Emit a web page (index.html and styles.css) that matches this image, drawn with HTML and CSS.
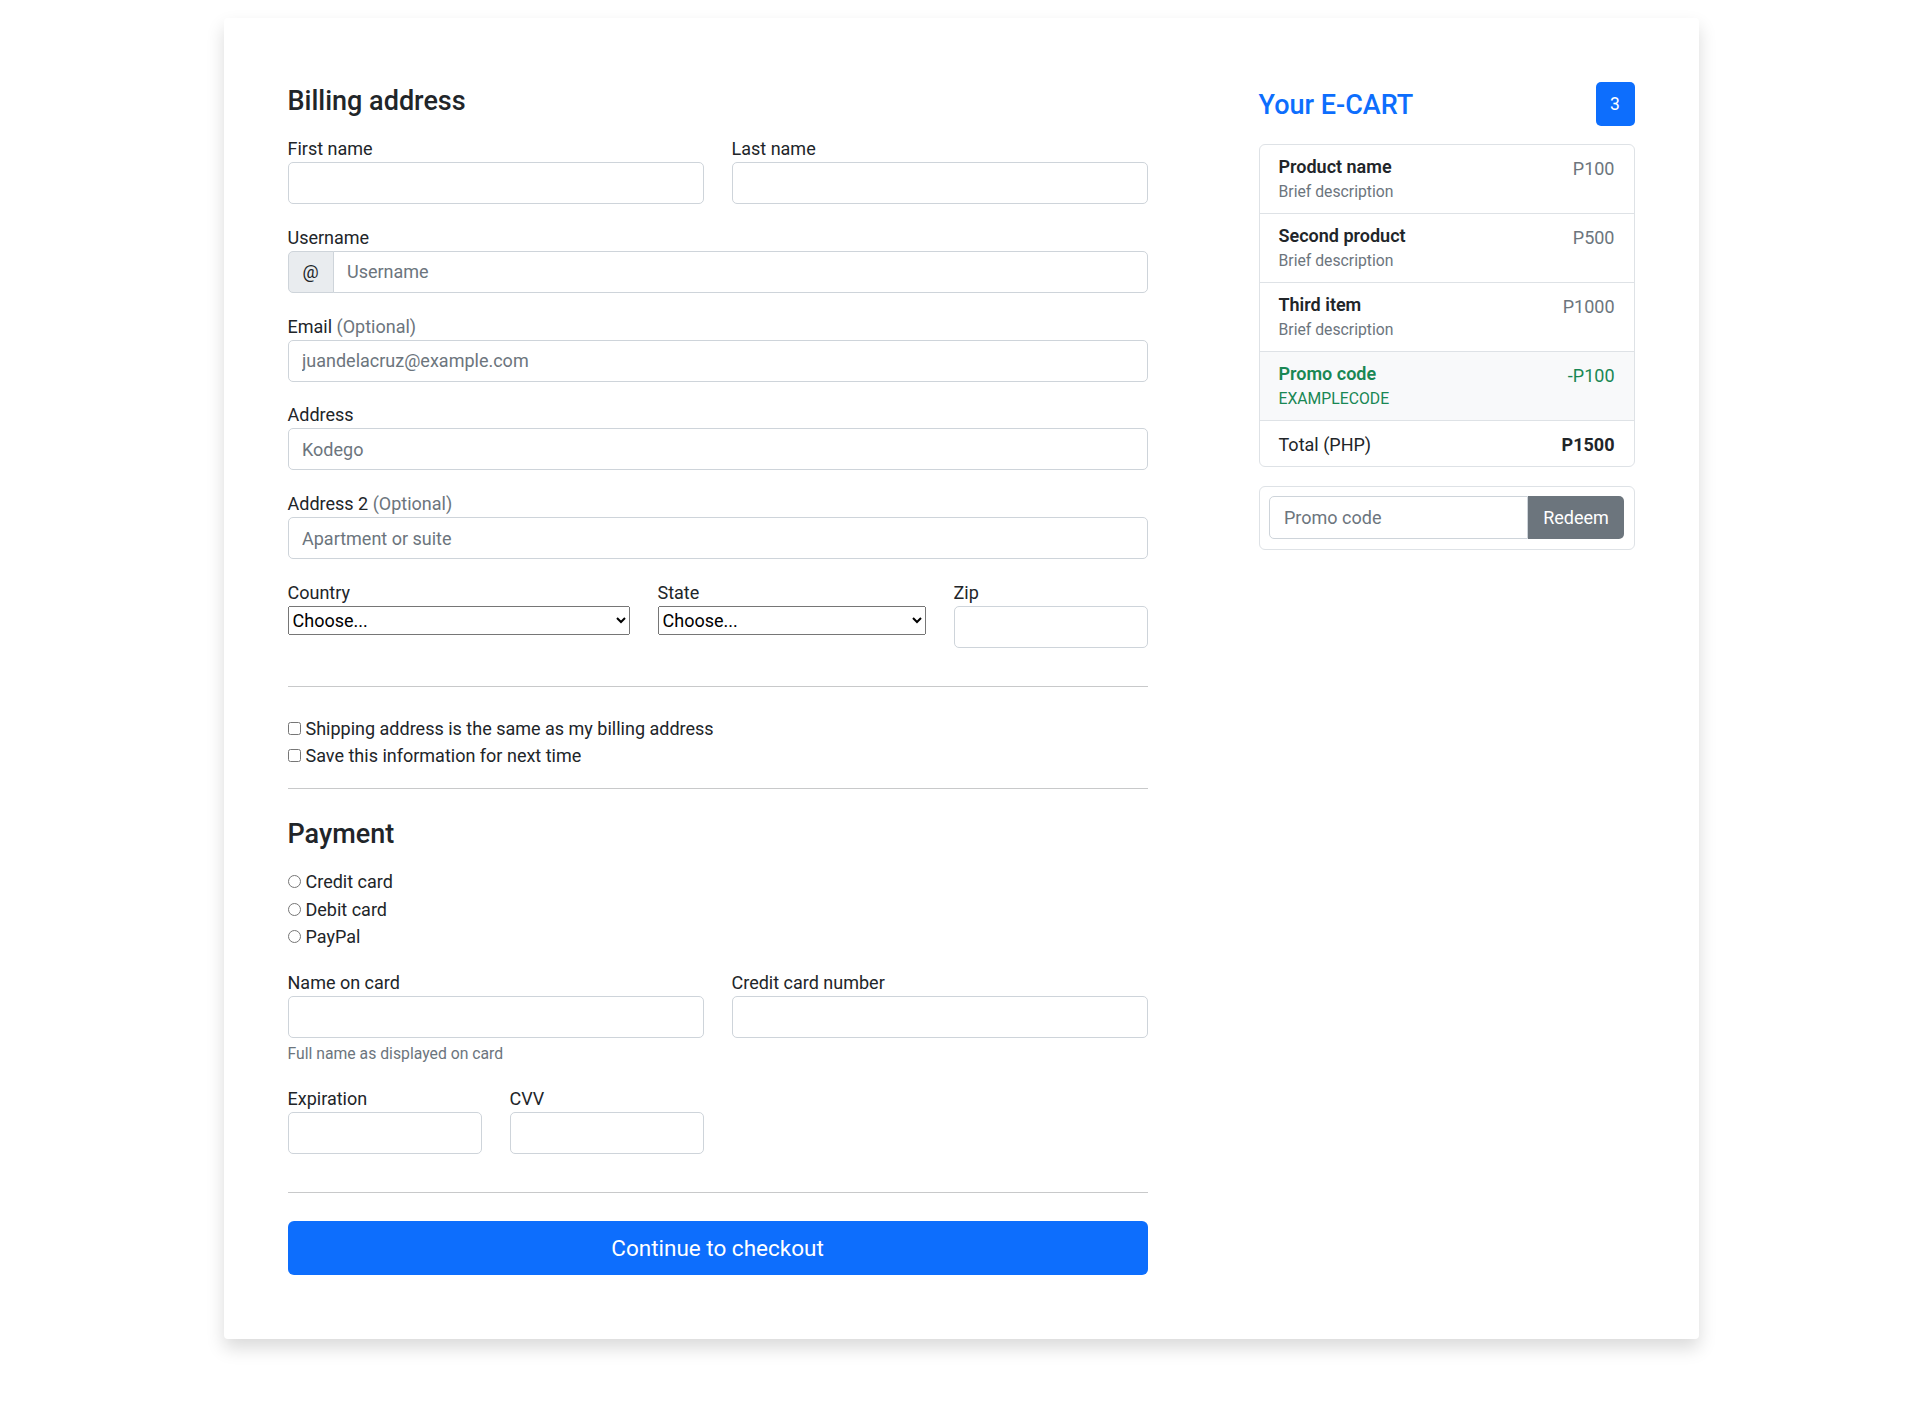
FILE: index.html
```html
<!DOCTYPE html>
<html lang="en">
<head>
<meta charset="utf-8">
<title>Checkout</title>
<link rel="stylesheet" href="styles.css">
</head>
<body>
<main class="page">
  <div class="card">
    <section class="billing">
      <h4 class="section-title">Billing address</h4>
      <form class="form">
        <div class="fields">
          <div class="row two">
            <div class="field">
              <label class="label">First name</label>
              <input class="control" type="text">
            </div>
            <div class="field">
              <label class="label">Last name</label>
              <input class="control" type="text">
            </div>
          </div>
          <div class="field">
            <label class="label">Username</label>
            <div class="input-group">
              <span class="addon">@</span>
              <input class="control grouped" type="text" placeholder="Username">
            </div>
          </div>
          <div class="field">
            <label class="label">Email <span class="muted">(Optional)</span></label>
            <input class="control" type="email" placeholder="juandelacruz@example.com">
          </div>
          <div class="field">
            <label class="label">Address</label>
            <input class="control" type="text" placeholder="Kodego">
          </div>
          <div class="field">
            <label class="label">Address 2 <span class="muted">(Optional)</span></label>
            <input class="control" type="text" placeholder="Apartment or suite">
          </div>
          <div class="row three">
            <div class="field">
              <label class="label">Country</label>
              <select class="native-select"><option>Choose...</option></select>
            </div>
            <div class="field">
              <label class="label">State</label>
              <select class="native-select"><option>Choose...</option></select>
            </div>
            <div class="field">
              <label class="label">Zip</label>
              <input class="control" type="text">
            </div>
          </div>
        </div>

        <hr class="rule rule-first">

        <div class="checks">
          <label class="check"><input type="checkbox">Shipping address is the same as my billing address</label>
          <label class="check"><input type="checkbox">Save this information for next time</label>
        </div>

        <hr class="rule rule-second">

        <h4 class="section-title payment-title">Payment</h4>

        <div class="radios">
          <label class="check"><input type="radio" name="pay">Credit card</label>
          <label class="check"><input type="radio" name="pay">Debit card</label>
          <label class="check"><input type="radio" name="pay">PayPal</label>
        </div>

        <div class="row two card-row">
          <div class="field">
            <label class="label">Name on card</label>
            <input class="control" type="text">
            <div class="help">Full name as displayed on card</div>
          </div>
          <div class="field">
            <label class="label">Credit card number</label>
            <input class="control" type="text">
          </div>
        </div>

        <div class="row exp-row">
          <div class="field">
            <label class="label">Expiration</label>
            <input class="control" type="text">
          </div>
          <div class="field">
            <label class="label">CVV</label>
            <input class="control" type="text">
          </div>
        </div>

        <hr class="rule rule-third">

        <button class="checkout" type="button">Continue to checkout</button>
      </form>
    </section>

    <aside class="cart">
      <div class="cart-head">
        <h3 class="cart-title">Your E-CART</h3>
        <span class="badge">3</span>
      </div>
      <ul class="items">
        <li class="item">
          <div>
            <h6 class="item-title">Product name</h6>
            <small class="item-desc">Brief description</small>
          </div>
          <span class="price">P100</span>
        </li>
        <li class="item">
          <div>
            <h6 class="item-title">Second product</h6>
            <small class="item-desc">Brief description</small>
          </div>
          <span class="price">P500</span>
        </li>
        <li class="item">
          <div>
            <h6 class="item-title">Third item</h6>
            <small class="item-desc">Brief description</small>
          </div>
          <span class="price">P1000</span>
        </li>
        <li class="item promo">
          <div>
            <h6 class="item-title">Promo code</h6>
            <small class="item-desc">EXAMPLECODE</small>
          </div>
          <span class="price">-P100</span>
        </li>
        <li class="item total">
          <span>Total (PHP)</span>
          <strong>P1500</strong>
        </li>
      </ul>
      <div class="promo-card">
        <div class="promo-group">
          <input class="promo-input" type="text" placeholder="Promo code">
          <button class="redeem" type="button">Redeem</button>
        </div>
      </div>
    </aside>
  </div>
</main>
</body>
</html>
```

FILE: styles.css
```css
* {
  box-sizing: border-box;
}

body {
  margin: 0;
  background: #fff;
  font-family: Roboto, "Liberation Sans", Arial, sans-serif;
  font-size: 18px;
  color: #212529;
}

.page {
  padding: 18px 0 40px;
}

.card {
  width: 1475px;
  margin: 0 auto;
  background: #fff;
  border-radius: 4px;
  box-shadow: 0 9px 18px rgba(0, 0, 0, 0.15);
  padding: 67px 64px 64px;
  display: flex;
  justify-content: space-between;
  align-items: flex-start;
}

.billing {
  width: 860px;
}

.cart {
  width: 376px;
}

.section-title {
  margin: 0;
  font-size: 27px;
  line-height: 32px;
  font-weight: 500;
  color: #212529;
}

.fields {
  margin-top: 20px;
  display: flex;
  flex-direction: column;
  gap: 21.8px;
}

.row {
  display: grid;
  column-gap: 28px;
}

.two {
  grid-template-columns: 416px 416px;
}

.three {
  grid-template-columns: 342px 268px 194px;
  align-items: start;
}

.exp-row {
  grid-template-columns: 194px 194px;
  margin-top: 21px;
}

.label {
  display: block;
  line-height: 24px;
  margin-bottom: 1px;
}

.muted {
  color: #6c757d;
}

.control {
  display: block;
  width: 100%;
  height: 42px;
  margin: 0;
  padding: 0 13.5px;
  border: 1px solid #ced4da;
  border-radius: 5px;
  font-family: inherit;
  font-size: 18px;
  color: #212529;
  background: #fff;
  outline: none;
}

.control::placeholder {
  color: #6c757d;
}

.input-group {
  display: flex;
}

.addon {
  flex: 0 0 46px;
  height: 42px;
  display: flex;
  align-items: center;
  justify-content: center;
  background: #e9ecef;
  border: 1px solid #ced4da;
  border-radius: 5px 0 0 5px;
  color: #212529;
}

.control.grouped {
  flex: 1;
  margin-left: -1px;
  border-radius: 0 5px 5px 0;
}

.native-select {
  display: block;
  width: 100%;
  height: 29px;
  margin: 0;
  font-family: inherit;
  font-size: 18px;
  color: #000;
}

.rule {
  border: 0;
  height: 1px;
  margin: 0;
  background: #c8c9ca;
}

.rule-first {
  margin-top: 38px;
}

.checks {
  margin-top: 28px;
}

.check {
  display: flex;
  align-items: center;
  line-height: 27px;
}

.radios .check {
  line-height: 27.5px;
}

.check input {
  width: 13px;
  height: 13px;
  margin: 0 5px 0 0;
  flex: 0 0 13px;
}

.rule-second {
  margin-top: 19.4px;
}

.payment-title {
  margin-top: 28.4px;
}

.radios {
  margin-top: 18.3px;
}

.card-row {
  margin-top: 20.2px;
}

.help {
  margin-top: 4.7px;
  font-size: 15.75px;
  line-height: 23.6px;
  color: #6c757d;
}

.rule-third {
  margin-top: 37.8px;
}

.checkout {
  display: block;
  width: 100%;
  height: 54px;
  margin-top: 27.7px;
  border: 0;
  border-radius: 6px;
  background: #0d6efd;
  color: #fff;
  font-family: inherit;
  font-size: 22.5px;
}

.cart-head {
  display: flex;
  justify-content: space-between;
  align-items: flex-start;
  margin-top: -3px;
}

.cart-title {
  margin: 6.9px 0 0;
  font-size: 27px;
  line-height: 32.4px;
  font-weight: 500;
  color: #0d6efd;
}

.badge {
  width: 39px;
  height: 44px;
  display: flex;
  align-items: center;
  justify-content: center;
  background: #0d6efd;
  color: #fff;
  border-radius: 5px;
  font-size: 17.5px;
}

.items {
  list-style: none;
  margin: 18.3px 0 0;
  padding: 0;
  border: 1px solid #dee2e6;
  border-radius: 6px;
  overflow: hidden;
}

.item {
  display: flex;
  justify-content: space-between;
  align-items: flex-start;
  padding: 11px 19px;
  border-bottom: 1px solid #dee2e6;
}

.item:last-child {
  border-bottom: 0;
}

.item-title {
  margin: 0 0 4px;
  font-size: 18px;
  line-height: 22px;
  font-weight: 600;
  color: #212529;
}

.item-desc {
  display: block;
  font-size: 15.75px;
  line-height: 20px;
  color: #6c757d;
}

.price {
  color: #6c757d;
  line-height: 22px;
  padding-top: 2px;
}

.promo {
  background: #f8f9fa;
}

.promo .item-title,
.promo .item-desc,
.promo .price {
  color: #198754;
}

.total {
  padding: 13px 19px 9.7px;
  line-height: 22px;
}

.total strong {
  font-weight: 700;
}

.promo-card {
  margin-top: 19px;
  border: 1px solid #dee2e6;
  border-radius: 6px;
  padding: 9.5px;
}

.promo-group {
  display: flex;
  height: 43px;
}

.promo-input {
  flex: 1;
  min-width: 0;
  height: 43px;
  margin: 0;
  padding: 0 14px;
  border: 1px solid #ced4da;
  border-radius: 5px 0 0 5px;
  font-family: inherit;
  font-size: 18px;
  color: #212529;
  outline: none;
}

.promo-input::placeholder {
  color: #6c757d;
}

.redeem {
  flex: 0 0 96px;
  height: 43px;
  margin: 0;
  border: 0;
  border-radius: 0 5px 5px 0;
  background: #6c757d;
  color: #fff;
  font-family: inherit;
  font-size: 18px;
}
```
